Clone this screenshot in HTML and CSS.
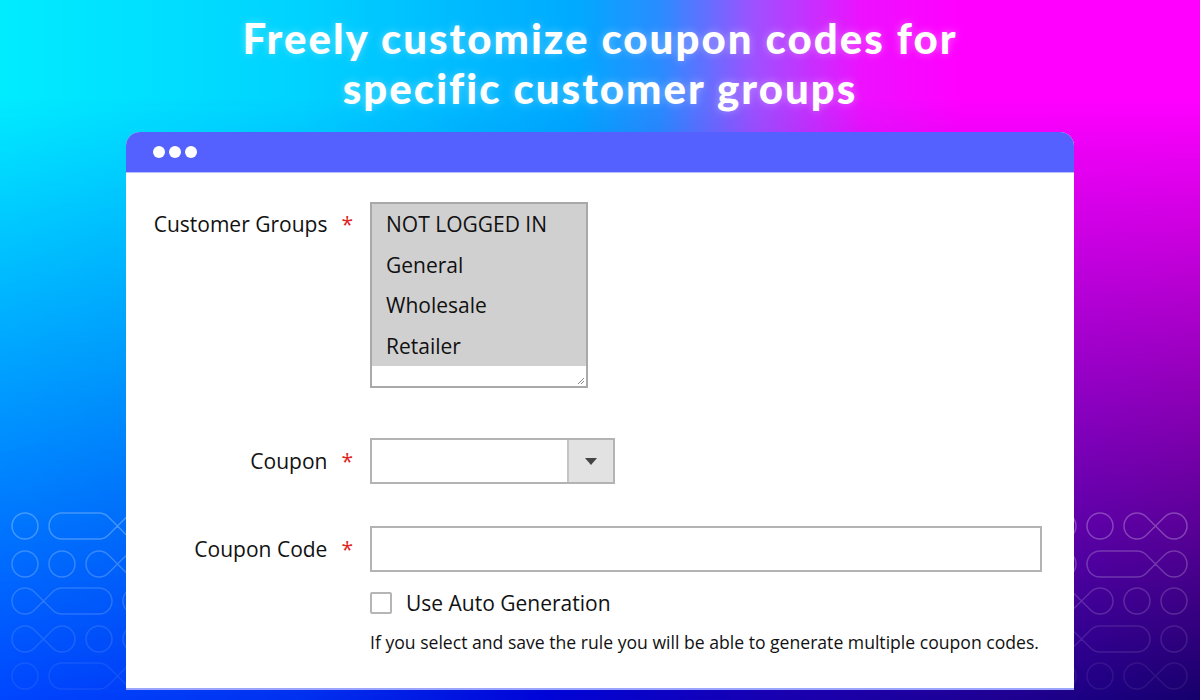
FILE: index.html
```html
<!DOCTYPE html>
<html lang="en">
<head>
    <meta charset="UTF-8">
    <meta name="viewport" content="width=device-width, initial-scale=1.0">
    <title>Coupon codes for customer groups</title>
    <link rel="stylesheet" href="styles.css">
</head>
<body>
    <div class="backdrop"></div>

    <!-- decorative line pattern, mostly hidden behind the window -->
    <svg class="pattern" width="1200" height="700" viewBox="0 0 1200 700" fill="none" stroke="#fff" stroke-width="1.5">
        <g class="row-1">
            <circle cx="25" cy="526" r="13"/>
            <path d="M108.19 516.81 A13 13 0 0 0 99 513 L62 513 A13 13 0 0 0 62 539 L99 539 A13 13 0 0 0 108.19 535.19 L126.81 516.81 A13 13 0 1 1 126.81 535.19 Z"/>
            <circle cx="1063" cy="526" r="13"/>
            <circle cx="1100" cy="526" r="13"/>
            <path d="M1146.19 516.81 A13 13 0 1 0 1146.19 535.19 L1164.81 516.81 A13 13 0 1 1 1164.81 535.19 Z"/>
        </g>
        <g class="row-2">
            <circle cx="25" cy="564" r="13"/>
            <circle cx="62" cy="564" r="13"/>
            <path d="M108.19 554.81 A13 13 0 1 0 108.19 573.19 L126.81 554.81 A13 13 0 1 1 126.81 573.19 Z"/>
            <circle cx="1063" cy="564" r="13"/>
            <path d="M1146.19 554.81 A13 13 0 0 0 1137 551 L1100 551 A13 13 0 0 0 1100 577 L1137 577 A13 13 0 0 0 1146.19 573.19 L1164.81 554.81 A13 13 0 1 1 1164.81 573.19 Z"/>
        </g>
        <g class="row-3">
            <path d="M34.19 591.81 A13 13 0 1 0 34.19 610.19 L52.81 591.81 A13 13 0 0 1 62 588 L99 588 A13 13 0 0 1 99 614 L62 614 A13 13 0 0 1 52.81 610.19 Z"/>
            <circle cx="136" cy="601" r="13"/>
            <path d="M1072.19 591.81 A13 13 0 1 0 1072.19 610.19 L1090.81 591.81 A13 13 0 1 1 1090.81 610.19 Z"/>
            <circle cx="1137" cy="601" r="13"/>
            <circle cx="1174" cy="601" r="13"/>
        </g>
        <g class="row-4">
            <path d="M34.19 629.81 A13 13 0 1 0 34.19 648.19 L52.81 629.81 A13 13 0 1 1 52.81 648.19 Z"/>
            <circle cx="99" cy="639" r="13"/>
            <circle cx="136" cy="639" r="13"/>
            <path d="M1072.19 629.81 A13 13 0 1 0 1072.19 648.19 L1090.81 629.81 A13 13 0 0 1 1100 626 L1137 626 A13 13 0 0 1 1137 652 L1100 652 A13 13 0 0 1 1090.81 648.19 Z"/>
            <circle cx="1174" cy="639" r="13"/>
        </g>
        <g class="row-5">
            <circle cx="25" cy="676" r="13"/>
            <path d="M108.19 666.81 A13 13 0 0 0 99 663 L62 663 A13 13 0 0 0 62 689 L99 689 A13 13 0 0 0 108.19 685.19 L126.81 666.81 A13 13 0 1 1 126.81 685.19 Z"/>
            <circle cx="1063" cy="676" r="13"/>
            <circle cx="1100" cy="676" r="13"/>
            <path d="M1146.19 666.81 A13 13 0 1 0 1146.19 685.19 L1164.81 666.81 A13 13 0 1 1 1164.81 685.19 Z"/>
        </g>
    </svg>

    <h1 class="headline">
        <span class="headline-line">Freely customize coupon codes for</span>
        <span class="headline-line">specific customer groups</span>
    </h1>

    <div class="window">
        <div class="window-bar">
            <span class="dot"></span>
            <span class="dot"></span>
            <span class="dot"></span>
        </div>

        <div class="window-body">
            <div class="field field-groups">
                <div class="field-label">Customer Groups<span class="req">*</span></div>
                <div class="multiselect">
                    <div class="option">NOT LOGGED IN</div>
                    <div class="option">General</div>
                    <div class="option">Wholesale</div>
                    <div class="option">Retailer</div>
                    <svg class="grip" width="8" height="8" viewBox="0 0 8 8" stroke="#888" stroke-width="1">
                        <path d="M1 7 L7 1 M4 7 L7 4"/>
                    </svg>
                </div>
            </div>

            <div class="field field-coupon">
                <div class="field-label">Coupon<span class="req">*</span></div>
                <div class="select">
                    <div class="select-value"></div>
                    <div class="select-arrow"><span class="caret"></span></div>
                </div>
            </div>

            <div class="field field-code">
                <div class="field-label">Coupon Code<span class="req">*</span></div>
                <div class="text-input"></div>
            </div>

            <div class="field-extra">
                <label class="check">
                    <span class="check-box"></span>
                    <span>Use Auto Generation</span>
                </label>
                <p class="note">If you select and save the rule you will be able to generate multiple coupon codes.</p>
            </div>
        </div>
    </div>
</body>
</html>
```

FILE: styles.css
```css
* {
    margin: 0;
    padding: 0;
    box-sizing: border-box;
}

body {
    width: 1200px;
    height: 700px;
    overflow: hidden;
    position: relative;
    display: flex;
    flex-direction: column;
    align-items: center;
    font-family: 'Open Sans', 'Liberation Sans', sans-serif;
    color: #111;
    background: linear-gradient(90deg, #0046ff 0%, #0030f0 25%, #0004d8 45%, #1800b0 65%, #1e0090 85%, #16006c 100%);
}

/* bright top colours fading out towards the bottom */
.backdrop {
    position: absolute;
    top: 0;
    left: 0;
    width: 100%;
    height: 100%;
    background: linear-gradient(90deg, #00ecff 0%, #00d2ff 25%, #00aaff 48%, #2a8cff 55%, #a050ff 63%, #ee10ff 72%, #ff00ff 80%, #ff00ff 100%);
    -webkit-mask-image: linear-gradient(180deg, #000 14%, transparent 100%);
    mask-image: linear-gradient(180deg, #000 14%, transparent 100%);
    z-index: 0;
}

.pattern {
    position: absolute;
    top: 0;
    left: 0;
    z-index: 1;
}

.pattern .row-1 { opacity: 0.26; }
.pattern .row-2 { opacity: 0.21; }
.pattern .row-3 { opacity: 0.16; }
.pattern .row-4 { opacity: 0.11; }
.pattern .row-5 { opacity: 0.07; }

.headline {
    position: relative;
    z-index: 2;
    padding-top: 13px;
    display: flex;
    flex-direction: column;
    align-items: center;
    font-family: 'Lato', 'Open Sans', sans-serif;
    font-weight: 900;
    font-size: 42px;
    color: #fff;
    letter-spacing: 2px;
    text-shadow: 0 0 9px rgba(255, 255, 255, 0.35);
}

.headline-line {
    display: block;
    line-height: 50px;
}

/* Fenêtre */
.window {
    position: relative;
    z-index: 2;
    width: 948px;
    height: 558px;
    margin-top: 19px;
    background: #fff;
    border-radius: 14px 14px 0 0;
    border-bottom: 2px solid #9aa4ff;
    display: flex;
    flex-direction: column;
}

.window-bar {
    height: 41px;
    background: #5561ff;
    border-radius: 14px 14px 0 0;
    border-bottom: 1px solid #b9beff;
    display: flex;
    align-items: center;
    gap: 4px;
    padding-left: 27px;
}

.dot {
    width: 12px;
    height: 12px;
    border-radius: 50%;
    background: #fff;
}

.window-body {
    padding-top: 29px;
    font-size: 21px;
}

.field {
    display: flex;
    align-items: center;
}

.field-label {
    width: 244px;
    padding-right: 17px;
    text-align: right;
    white-space: nowrap;
}

.req {
    color: #e02424;
    margin-left: 14px;
}

.field-groups {
    align-items: flex-start;
}

.field-groups .field-label {
    padding-top: 2px;
    line-height: 41px;
}

.multiselect {
    position: relative;
    width: 218px;
    height: 186px;
    border: 2px solid #a9a9a9;
    background: #fff;
}

.option {
    height: 40.5px;
    line-height: 40.5px;
    padding-left: 14px;
    background: #d0d0d0;
}

.grip {
    position: absolute;
    right: 1px;
    bottom: 1px;
}

.field-coupon {
    margin-top: 50px;
}

.select {
    display: flex;
    width: 245px;
    height: 46px;
    border: 2px solid #b3b3b3;
}

.select-value {
    flex: 1;
}

.select-arrow {
    width: 46px;
    background: #e2e2e2;
    border-left: 2px solid #c4c4c4;
    display: flex;
    align-items: center;
    justify-content: center;
}

.caret {
    width: 0;
    height: 0;
    border-left: 6px solid transparent;
    border-right: 6px solid transparent;
    border-top: 7px solid #444;
}

.field-code {
    margin-top: 42px;
}

.text-input {
    width: 672px;
    height: 46px;
    border: 2px solid #b3b3b3;
}

.field-extra {
    padding-left: 244px;
    margin-top: 20px;
}

.check {
    display: flex;
    align-items: center;
    gap: 14px;
    height: 22px;
}

.check-box {
    width: 22px;
    height: 22px;
    border: 2px solid #b5b5b5;
    border-radius: 2px;
}

.note {
    margin-top: 16px;
    font-size: 17.6px;
    line-height: 24px;
}
```
